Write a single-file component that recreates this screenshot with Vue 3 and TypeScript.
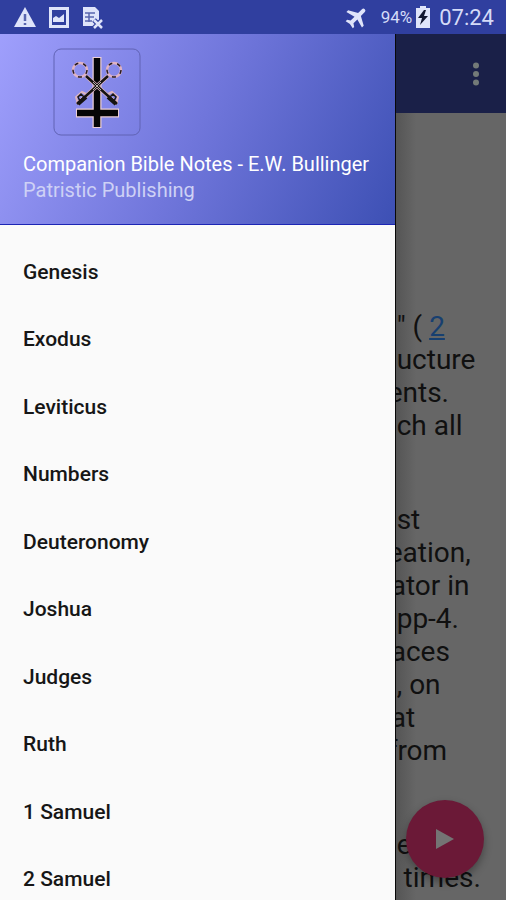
<script setup lang="ts">
interface Line {
  text: string
  link?: string
  cut?: 'slight' | 'deep'
}

const books: string[] = [
  'Genesis', 'Exodus', 'Leviticus', 'Numbers', 'Deuteronomy',
  'Joshua', 'Judges', 'Ruth', '1 Samuel', '2 Samuel',
]

const paragraphs: Line[][] = [
  [
    { text: '" ( ', link: '2' },
    { text: 'ucture' },
    { text: 'ents.', cut: 'deep' },
    { text: 'ch all' },
  ],
  [
    { text: 'st' },
    { text: 'eation,', cut: 'deep' },
    { text: 'ator in', cut: 'slight' },
    { text: 'pp-4.' },
    { text: 'aces', cut: 'slight' },
    { text: ', on' },
    { text: 'at', cut: 'slight' },
    { text: 'from', cut: 'deep' },
  ],
  [
    { text: 'e' },
    { text: '\u00a0times.' },
  ],
]
</script>

<template>
  <div class="screen">
    <header class="status">
      <div class="group notices">
        <svg width="24" height="24" viewBox="0 0 24 24" aria-hidden="true">
          <path d="M12 2 23 22H1z" fill="#dfe4fa" />
          <path d="M12 9v7M12 18v2" stroke="#5965ae" stroke-width="2.5" />
        </svg>
        <svg width="24" height="24" viewBox="0 0 24 24" aria-hidden="true">
          <path fill-rule="evenodd" d="M2 2h20v21H2zM5 5v15h14V5z" fill="#dfe4fa" />
          <path d="M6 17v-4l3-2 3 2 5-4v8z" fill="#dfe4fa" />
        </svg>
        <svg width="24" height="24" viewBox="0 0 24 24" aria-hidden="true">
          <path d="M2 2h12l4 4v15H2z" fill="#dfe4fa" />
          <path d="M4 8h10M4 12h9M4 16h7M8 8v9" stroke="#5965ae" stroke-width="1.5" />
          <path d="m13 15 8 8m0-8-8 8" stroke="#303f9f" stroke-width="5" />
          <path d="m13 15 8 8m0-8-8 8" stroke="#dfe4fa" stroke-width="2.5" />
        </svg>
      </div>
      <div class="group">
        <svg class="plane" width="24" height="24" viewBox="0 0 24 24" aria-hidden="true">
          <path transform="rotate(45 12 12)" d="M23 16v-2.500l-9-5V3a2 2 0 0 0-4 0v5.500l-9 5V16l9-2.500V19L7 21v2l5-1 5 1v-2l-3-2v-5.500z" fill="#dfe4fa" />
        </svg>
        <span class="percent">94%</span>
        <svg width="16" height="22" viewBox="0 0 16 22" aria-hidden="true">
          <path d="M5 0h6v2h4v20H1V2h4z" fill="#dfe4fa" />
          <path d="M9 4 3 12h4l-2 7 8-9H9l2-6z" fill="#111631" />
        </svg>
        <span class="clock">07:24</span>
      </div>
    </header>

    <div class="body">
      <nav class="drawer" aria-label="Books">
        <div class="banner">
          <svg class="logo" width="88" height="88" viewBox="0 0 88 88" aria-hidden="true">
            <rect x="1" y="1" width="86" height="86" rx="7" fill="none" stroke="#6063b4" />
            <path d="M44 9v71M23 65h43" stroke="#eccfd6" stroke-width="9" fill="none" />
            <path d="M44 10v69M24 65h41" stroke="#050505" stroke-width="6.500" fill="none" />
            <g fill="none" stroke="#dcb4c0">
              <path d="m33 28 31 28M55 28 24 56" stroke-width="4" />
              <path d="m25 56-2-7 6-5 6 3M63 56l2-7-6-5-6 3" stroke-width="2" />
            </g>
            <g fill="none" stroke="#151313">
              <path d="m33 28 31 28M55 28 24 56" stroke-width="2.500" />
              <path d="m25 56 8-7M63 56l-8-7" stroke-width="4" />
              <path d="m27 53-2-4 3-3 3 3M61 53l2-4-3-3-3 3" stroke-width="1.500" />
            </g>
            <g fill="none" stroke="#dfb3c4" stroke-width="2.500">
              <circle cx="27" cy="22" r="7" />
              <circle cx="61" cy="22" r="7" />
            </g>
            <g fill="none" stroke="#251b21" stroke-width="1.500" stroke-dasharray="4 5">
              <circle cx="27" cy="22" r="7" />
              <circle cx="61" cy="22" r="7" />
            </g>
            <path d="m40 34 8 8M48 34l-8 8" stroke="#b9b2a9" stroke-width="1" />
          </svg>
          <div class="title">Companion Bible Notes - E.W. Bullinger</div>
          <div class="publisher">Patristic Publishing</div>
        </div>
        <ul class="books">
          <li v-for="book in books" :key="book"><a href="#">{{ book }}</a></li>
        </ul>
      </nav>

      <main class="content">
        <div class="toolbar">
          <button class="more" type="button" aria-label="More options">
            <svg width="8" height="24" viewBox="0 0 8 24" aria-hidden="true">
              <circle cx="4" cy="3.500" r="3" />
              <circle cx="4" cy="12" r="3" />
              <circle cx="4" cy="20.500" r="3" />
            </svg>
          </button>
        </div>
        <article class="notes">
          <p v-for="(lines, i) in paragraphs" :key="i">
            <span v-for="line in lines" :key="line.text" class="line" :class="line.cut">{{ line.text }}<a v-if="line.link" href="#">{{ line.link }}</a></span>
          </p>
        </article>
        <button class="play" type="button" aria-label="Play">
          <svg width="18" height="20" viewBox="0 0 18 20" aria-hidden="true">
            <path d="M0 0 18 10 0 20z" fill="#747474" />
          </svg>
        </button>
      </main>
    </div>
  </div>
</template>

<style>
body {
  margin: 0;
}
</style>

<style scoped>
.screen {
  display: flex;
  flex-direction: column;
  height: 100vh;
  overflow: hidden;
  font-family: Roboto, "Liberation Sans", sans-serif;
}

.status {
  display: flex;
  flex: none;
  align-items: center;
  justify-content: space-between;
  height: 34px;
  padding: 0 12px 0 13px;
  background: #303f9f;
  color: #d5dbf8;
}

.group {
  display: flex;
  align-items: center;
}

.notices {
  gap: 10px;
}

.plane {
  margin-right: 12px;
}

.percent {
  margin-right: 3px;
  font-size: 17px;
}

.clock {
  margin-left: 8px;
  font-size: 22px;
}

.body {
  display: grid;
  flex: 1;
  grid-template-columns: 78% 1fr;
  min-height: 0;
}

.drawer {
  min-height: 0;
  overflow: hidden;
  background: #fafafa;
}

.banner {
  display: flex;
  flex-direction: column;
  height: 191px;
  padding: 14px 23px 0;
  box-sizing: border-box;
  border-bottom: 1px solid #1c25b4;
  background: linear-gradient(115deg, #9f9ffc 0%, #7076db 50%, #3d50b4 100%);
  color: #fff;
}

.logo {
  flex: none;
  margin: 0 30px 15px;
}

.title,
.publisher {
  font-size: 20px;
  line-height: 26px;
  white-space: nowrap;
}

.publisher {
  color: #ced1f5;
}

.books {
  margin: 0;
  padding: 13px 0 0;
  list-style: none;
}

.books a {
  display: flex;
  align-items: center;
  height: 67px;
  padding: 0 23px;
  color: #161616;
  font-size: 21px;
  font-weight: 500;
  text-decoration: none;
}

.books li:nth-child(even) a {
  height: 68px;
}

.content {
  position: relative;
  min-width: 0;
  overflow: hidden;
  border-left: 1px solid #080808;
  background: linear-gradient(90deg, #555 0, #666 20px);
}

.toolbar {
  display: flex;
  align-items: center;
  justify-content: flex-end;
  height: 79px;
  padding-right: 20px;
  background: #1a2048;
}

.more {
  display: flex;
  padding: 0 6px;
  border: 0;
  background: none;
  fill: #737a78;
}

.notes {
  padding-top: 197px;
  color: #101010;
  font-size: 28px;
  line-height: 33px;
}

.notes p {
  margin: 0 0 61px;
}

.line {
  display: block;
  padding-left: 1px;
  white-space: nowrap;
}

.slight {
  margin-left: -6px;
}

.deep {
  margin-left: -9px;
}

.notes a {
  color: #173f70;
}

.play {
  position: absolute;
  right: 22px;
  bottom: 22px;
  display: flex;
  align-items: center;
  justify-content: center;
  width: 78px;
  height: 78px;
  padding: 0;
  border: 0;
  border-radius: 50%;
  background: #6b1937;
  box-shadow: 0 4px 8px #0005;
}
</style>
